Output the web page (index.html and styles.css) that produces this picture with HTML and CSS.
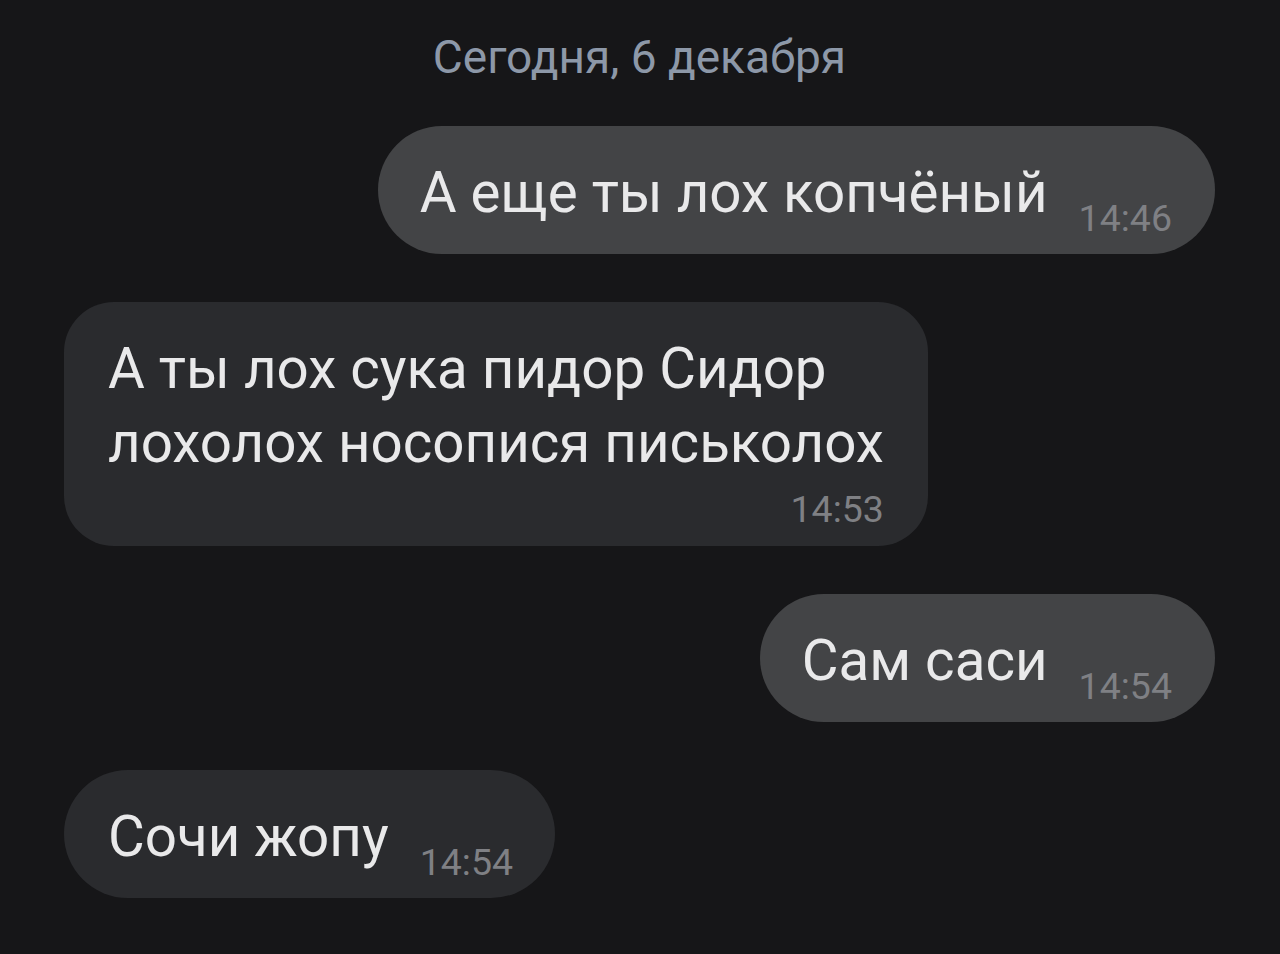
FILE: index.html
```html
<!DOCTYPE html>
<html lang="ru">
<head>
<meta charset="utf-8">
<link rel="stylesheet" href="styles.css">
</head>
<body>
<main class="chat">
  <div class="date">Сегодня, 6 декабря</div>
  <div class="bubble out">
    <span class="text">А еще ты лох копчёный</span>
    <span class="time">14:46</span>
  </div>
  <div class="bubble in block">
    <div class="text">А ты лох сука пидор Сидор<br>лохолох носопися письколох</div>
    <div class="time">14:53</div>
  </div>
  <div class="bubble out">
    <span class="text">Сам саси</span>
    <span class="time">14:54</span>
  </div>
  <div class="bubble in">
    <span class="text">Сочи жопу</span>
    <span class="time">14:54</span>
  </div>
</main>
</body>
</html>
```

FILE: styles.css
```css
html, body {
  margin: 0;
  padding: 0;
  background: #161618;
  height: 100%;
}
body {
  font-family: Roboto, "Noto Sans", sans-serif;
  color: #e9e9ea;
}
.chat {
  display: flex;
  flex-direction: column;
  padding: 31px 65px 0 64px;
  gap: 48px;
}
.date {
  align-self: center;
  font-size: 46px;
  line-height: 52px;
  color: #8d98a8;
  margin-bottom: -5px;
}
.bubble {
  display: flex;
  align-items: flex-end;
  gap: 31px;
  padding: 30px 43px 24px 42px;
  border-radius: 64px;
}
.bubble.out {
  align-self: flex-end;
  background: #434446;
}
.bubble.in {
  align-self: flex-start;
  background: #2a2b2e;
  padding-left: 44px;
  padding-right: 42px;
}
.text {
  font-size: 56.5px;
  line-height: 74px;
}
.time {
  font-size: 37.5px;
  line-height: 36px;
  color: #7f8084;
  margin-bottom: -6px;
}
.bubble.block {
  display: block;
  border-radius: 50px;
  padding: 30px 44px 19px 44px;
}
.bubble.block .time {
  text-align: right;
  margin: 11px 0 0 0;
}
```
